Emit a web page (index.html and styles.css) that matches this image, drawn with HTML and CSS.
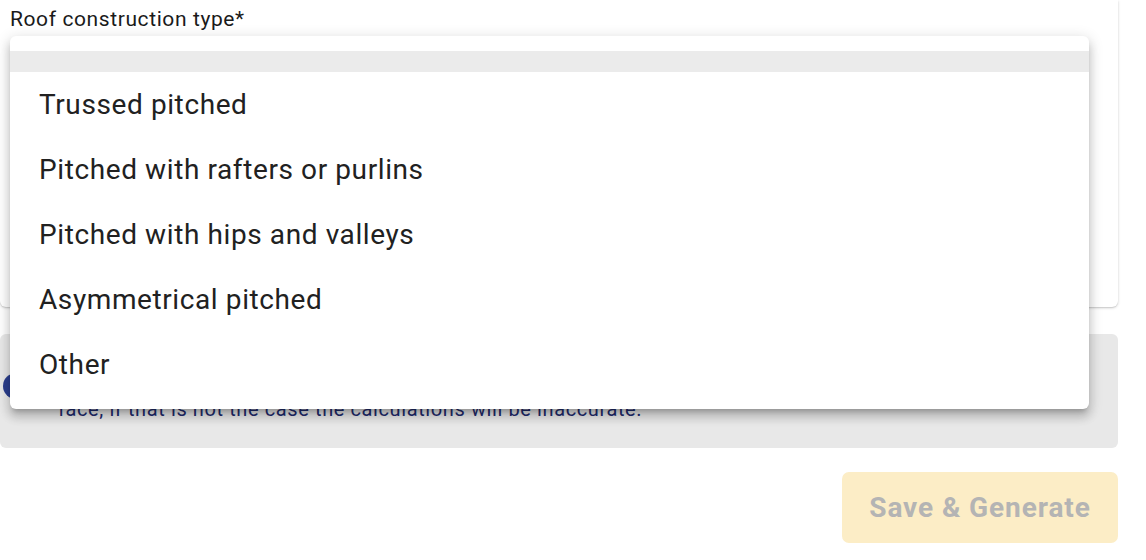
FILE: index.html
```html
<!DOCTYPE html>
<html lang="en">
<head>
<meta charset="utf-8">
<title>Roof construction type</title>
<link rel="stylesheet" href="styles.css">
</head>
<body>
<div class="page">
  <section class="card">
    <div class="field">
      <label class="field-label">Roof construction type*</label>
      <div class="select"></div>
    </div>
  </section>

  <div class="info">
    <span class="info-icon"></span>
    <p class="info-text">This calculation assumes that every rafter spans the full length of the roof face, if that is not the case the calculations will be inaccurate.</p>
  </div>

  <div class="actions">
    <button class="btn-primary" disabled>Save &amp; Generate</button>
  </div>

  <ul class="menu">
    <li class="menu-blank"></li>
    <li class="menu-item">Trussed pitched</li>
    <li class="menu-item">Pitched with rafters or purlins</li>
    <li class="menu-item">Pitched with hips and valleys</li>
    <li class="menu-item">Asymmetrical pitched</li>
    <li class="menu-item">Other</li>
  </ul>
</div>
</body>
</html>
```

FILE: styles.css
```css
* { box-sizing: border-box; }
html, body { margin: 0; padding: 0; background: #ffffff; }
body { font-family: Roboto, "Liberation Sans", sans-serif; color: #212121; overflow: hidden; }

.page {
  position: relative;
  width: 1146px;
  height: 560px;
  display: flex;
  flex-direction: column;
}

.card {
  width: 1118px;
  height: 307px;
  background: #ffffff;
  border-radius: 0 0 6px 6px;
  box-shadow: 0 1px 3px rgba(0,0,0,0.18), 0 1px 1px rgba(0,0,0,0.08);
  padding: 7px 10px 0;
}

.field-label {
  display: block;
  font-size: 21px;
  line-height: 24px;
  letter-spacing: 0.6px;
  color: #1a1a1a;
}

.select {
  height: 56px;
  margin-top: 6px;
}

.info {
  position: relative;
  width: 1118px;
  height: 114px;
  margin-top: 27px;
  background: #e8e8e8;
  border-radius: 6px;
  display: flex;
  align-items: flex-start;
  padding: 33px 40px 0 3px;
  gap: 29px;
}

.info-icon {
  flex: none;
  width: 26px;
  height: 26px;
  margin-top: 6px;
  border-radius: 50%;
  background: #2b3e8e;
}

.info-text {
  margin: 0;
  font-size: 20px;
  line-height: 28px;
  letter-spacing: 0.6px;
  color: #1f2c6e;
  max-width: 720px;
}

.actions {
  width: 1118px;
  margin-top: 24px;
  display: flex;
  justify-content: flex-end;
}

.btn-primary {
  width: 276px;
  height: 71px;
  border: 0;
  border-radius: 7px;
  background: #fcedc6;
  color: #b4b4b4;
  font-family: Roboto, "Liberation Sans", sans-serif;
  font-weight: 700;
  font-size: 28px;
  letter-spacing: 0.9px;
  padding: 0;
}

.menu {
  position: absolute;
  left: 10px;
  top: 36px;
  width: 1079px;
  margin: 0;
  padding: 15px 0 12px;
  list-style: none;
  background: #ffffff;
  border-radius: 6px;
  box-shadow: 0 5px 5px -3px rgba(0,0,0,0.2), 0 8px 10px 1px rgba(0,0,0,0.14), 0 3px 14px 2px rgba(0,0,0,0.12);
}

.menu-blank {
  height: 21px;
  background: #ebebeb;
}

.menu-item {
  height: 65px;
  display: flex;
  align-items: center;
  padding-left: 29px;
  font-size: 28px;
  letter-spacing: 0.6px;
  color: #212121;
}
```
